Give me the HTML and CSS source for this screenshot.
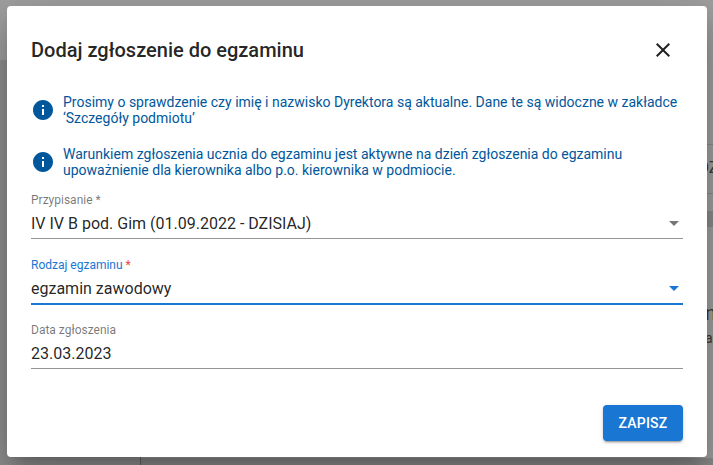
FILE: index.html
```html
<!DOCTYPE html>
<html>
  <head>
    <meta charset="UTF-8" />
    <title>Dodaj zgłoszenie do egzaminu</title>
    <link rel="stylesheet" href="styles.css">
  </head>
  <body>

    <!-- page behind the dialog -->
    <div class="backdrop">
      <div class="bg-header"></div>
      <div class="bg-sidebar"></div>
      <div class="bg-main">
        <div class="bg-row bg-row-text">OZ</div>
        <div class="bg-row bg-row-head"></div>
        <div class="bg-row bg-row-cell">
          <div class="bg-cell-title">n</div>
          <div class="bg-cell-sub">ar</div>
        </div>
        <div class="bg-row bg-row-head"></div>
      </div>
    </div>

    <div class="dialog">
      <div class="dialog-title">
        <h2>Dodaj zgłoszenie do egzaminu</h2>
        <button class="close-btn" aria-label="Zamknij">
          <svg viewBox="0 0 24 24" width="24" height="24"><path d="M19 6.41 17.59 5 12 10.59 6.41 5 5 6.41 10.59 12 5 17.59 6.41 19 12 13.41 17.59 19 19 17.59 13.41 12z"/></svg>
        </button>
      </div>

      <div class="notice">
        <svg class="notice-icon" viewBox="0 0 24 24" width="24" height="24"><path d="M12 2C6.48 2 2 6.48 2 12s4.48 10 10 10 10-4.48 10-10S17.52 2 12 2zm1 15h-2v-6h2v6zm0-8h-2V7h2v2z"/></svg>
        <p>Prosimy o sprawdzenie czy imię i nazwisko Dyrektora są aktualne. Dane te są widoczne w zakładce ‘Szczegóły podmiotu’</p>
      </div>
      <div class="notice">
        <svg class="notice-icon" viewBox="0 0 24 24" width="24" height="24"><path d="M12 2C6.48 2 2 6.48 2 12s4.48 10 10 10 10-4.48 10-10S17.52 2 12 2zm1 15h-2v-6h2v6zm0-8h-2V7h2v2z"/></svg>
        <p>Warunkiem zgłoszenia ucznia do egzaminu jest aktywne na dzień zgłoszenia do egzaminu upoważnienie dla kierownika albo p.o. kierownika w podmiocie.</p>
      </div>

      <div class="field">
        <label>Przypisanie *</label>
        <div class="field-value">IV IV B pod. Gim (01.09.2022 - DZISIAJ)<span class="arrow"></span></div>
      </div>
      <div class="field field-focused">
        <label>Rodzaj egzaminu <span class="req">*</span></label>
        <div class="field-value">egzamin zawodowy<span class="arrow"></span></div>
      </div>
      <div class="field">
        <label>Data zgłoszenia</label>
        <div class="field-value">23.03.2023</div>
      </div>

      <div class="dialog-actions">
        <button class="save-btn">ZAPISZ</button>
      </div>
    </div>

  </body>
</html>
```

FILE: styles.css
```css
html, body {
  margin: 0;
  height: 100%;
}

body {
  font-family: Roboto, 'Liberation Sans', sans-serif;
  width: 713px;
  height: 465px;
  overflow: hidden;
  background: #a0a0a0;
  position: relative;
}

/* greyed page behind */
.backdrop {
  position: absolute;
  inset: 0;
  display: flex;
  background: #a0a0a0;
  color: #3a3a3a;
}

.bg-header {
  position: absolute;
  top: 0;
  left: 0;
  right: 0;
  height: 60px;
  background: #a0a0a0;
}

.bg-sidebar {
  flex: none;
  width: 140px;
  background: #909090;
  border-right: 1px solid #666;
}

.bg-main {
  flex: 1;
  min-width: 0;
  padding-top: 144px;
}

.bg-row {
  border-bottom: 1px solid #8c8c8c;
  padding-left: 557px;
  white-space: nowrap;
}

.bg-row-text {
  height: 48px;
  border-top: 1px solid #8c8c8c;
  font-size: 16px;
  line-height: 46px;
}

.bg-row-head {
  height: 15px;
  margin-top: 17px;
  background: #8c8c8c;
}

.bg-row-cell {
  height: 157px;
  margin-bottom: -17px;
  padding-left: 564px;
  border-bottom: none;
}

.bg-cell-title {
  font-size: 20px;
  line-height: 24px;
  margin-top: 74px;
}

.bg-cell-sub {
  font-size: 14px;
  line-height: 20px;
  margin-top: 3px;
}

.dialog {
  position: absolute;
  left: 7px;
  top: 6px;
  width: 700px;
  height: 451px;
  box-sizing: border-box;
  padding: 0 24px;
  background: #fff;
  border-radius: 4px;
  box-shadow: 0 11px 15px -7px rgba(0,0,0,.2), 0 24px 38px 3px rgba(0,0,0,.14), 0 9px 46px 8px rgba(0,0,0,.12);
  display: flex;
  flex-direction: column;
}

.dialog-title {
  display: flex;
  align-items: center;
  justify-content: space-between;
  height: 32px;
  margin-top: 28px;
  margin-bottom: 25px;
}

h2 {
  margin: 0;
  font-size: 20px;
  font-weight: 500;
  line-height: 32px;
  color: rgba(0,0,0,.87);
}

.close-btn {
  width: 24px;
  height: 24px;
  padding: 0;
  border: none;
  background: none;
  margin-right: 8px;
}

.close-btn svg {
  display: block;
  fill: rgba(0,0,0,.87);
}

.notice {
  display: flex;
  align-items: center;
  gap: 8px;
  height: 38px;
  margin-bottom: 14px;
  color: #01579b;
}

.notice p {
  margin: 0;
  font-size: 14px;
  line-height: 16px;
}

.notice-icon {
  flex: none;
  fill: #01579b;
}

.field {
  border-bottom: 1px solid #949494;
  margin-bottom: 19px;
}

.notice + .field {
  margin-top: -2px;
}

.field label {
  display: block;
  font-size: 12px;
  line-height: 14px;
  color: rgba(0,0,0,.54);
}

.field-value {
  display: flex;
  justify-content: space-between;
  align-items: center;
  font-size: 16px;
  line-height: 19px;
  padding: 7px 0 5px;
  color: rgba(0,0,0,.87);
}

.arrow {
  width: 0;
  height: 0;
  margin-right: 4px;
  border-left: 5px solid transparent;
  border-right: 5px solid transparent;
  border-top: 5px solid rgba(0,0,0,.54);
}

.field-focused {
  border-bottom: 2px solid #1976d2;
  margin-bottom: 18px;
}

.field-focused label {
  color: #1976d2;
}

.field-focused .req {
  color: #f44336;
}

.field-focused .arrow {
  border-top-color: #1976d2;
}

.dialog-actions {
  display: flex;
  justify-content: flex-end;
  margin-top: auto;
  margin-bottom: 16px;
}

.save-btn {
  width: 80px;
  height: 36px;
  border: none;
  border-radius: 4px;
  background: #1976d2;
  color: #fff;
  font-family: inherit;
  font-size: 14px;
  font-weight: 500;
  letter-spacing: 0.2px;
  box-shadow: 0 3px 1px -2px rgba(0,0,0,.2), 0 2px 2px 0 rgba(0,0,0,.14), 0 1px 5px 0 rgba(0,0,0,.12);
}
```
